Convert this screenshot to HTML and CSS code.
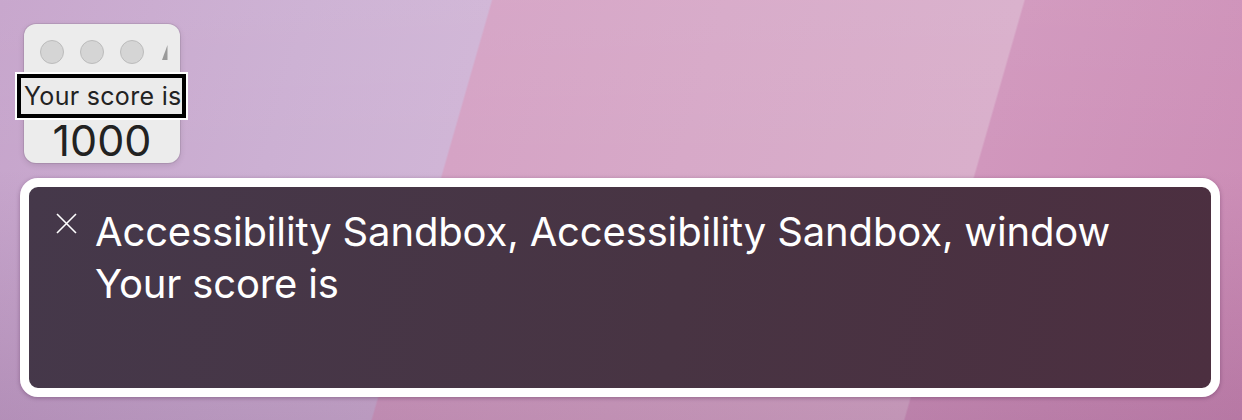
FILE: index.html
```html
<!DOCTYPE html>
<html lang="en">
<head>
  <meta charset="UTF-8">
  <title>Accessibility Sandbox</title>
  <link rel="stylesheet" href="styles.css">
</head>
<body>
  <div class="desktop">
    <!-- Tiny app window -->
    <div class="window">
      <div class="titlebar">
        <span class="light"></span>
        <span class="light"></span>
        <span class="light"></span>
        <svg class="tool-edge" width="6" height="15" viewBox="0 0 6 15">
          <polygon points="5.5,0 5.5,15 0,15" fill="#9a9a9a"/>
        </svg>
      </div>
      <div class="focus-ring">
        <span class="label">Your score is</span>
      </div>
      <div class="score">1000</div>
    </div>

    <!-- VoiceOver caption panel -->
    <div class="caption-panel">
      <div class="caption">
        <svg class="close" width="21" height="21" viewBox="0 0 21 21">
          <path d="M1 1 L20 20 M20 1 L1 20" stroke="#fff" stroke-width="1.6" fill="none"/>
        </svg>
        <div class="caption-text">
          <div>Accessibility Sandbox, Accessibility Sandbox, window</div>
          <div>Your score is</div>
        </div>
      </div>
    </div>
  </div>
</body>
</html>
```

FILE: styles.css
```css
body {
  margin: 0;
  padding: 0;
  font-family: Inter, "Noto Sans", sans-serif;
}
.desktop {
  width: 1242px;
  height: 420px;
  overflow: hidden;
  padding-top: 24px;
  box-sizing: border-box;
  background:
    linear-gradient(180deg, rgba(255,255,255,0.04) 0%, rgba(255,255,255,0) 40%, rgba(70,10,70,0.16) 100%),
    linear-gradient(106deg, #c6a4cb 0, #ccb0d3 300px, #d0b5d6 472px, #d5a3c5 474px, #d7a9c8 700px, #d9afcb 984px, #d197bd 986px, #cc8db6 100%);
}

/* app window */
.window {
  width: 156px;
  height: 139px;
  margin-left: 24px;
  background: #ececec;
  border-radius: 12px;
  box-shadow: 0 0 0 1px rgba(0,0,0,0.08), 0 2px 6px rgba(0,0,0,0.12);
}
.titlebar {
  display: flex;
  align-items: center;
  gap: 16px;
  height: 48px;
  padding: 7px 0 0 16px;
  box-sizing: border-box;
  overflow: hidden;
}
.light {
  width: 22px;
  height: 22px;
  border-radius: 50%;
  background: #d5d5d5;
  border: 1px solid #bcbcbc;
  flex: none;
}
.tool-edge {
  flex: none;
  margin-left: 2px;
  margin-top: 1px;
}
.focus-ring {
  width: 173px;
  height: 48px;
  margin-left: -9px;
  box-sizing: border-box;
  border: 2px solid #fff;
  position: relative;
  z-index: 1;
}
.focus-ring .label {
  display: block;
  height: 100%;
  box-sizing: border-box;
  border: 4px solid #000;
  background: #ebebeb;
  padding-left: 3px;
  font-size: 25px;
  letter-spacing: 0.3px;
  line-height: 36px;
  color: #222;
  white-space: nowrap;
  overflow: hidden;
}
.score {
  text-align: center;
  font-size: 43px;
  line-height: 40px;
  color: #222;
}

/* caption panel */
.caption-panel {
  width: 1200px;
  height: 219px;
  margin: 15px 0 0 20px;
  box-sizing: border-box;
  border: 9px solid #fff;
  border-radius: 18px;
  background: linear-gradient(100deg, #45384a 0%, #483443 55%, #4c2f40 100%);
  box-shadow: 0 1px 4px rgba(60,20,60,0.35);
}
.caption {
  display: flex;
  gap: 18px;
  padding: 19px 27px;
}
.close {
  flex: none;
  margin-top: 7px;
}
.caption-text {
  color: #fff;
  font-size: 40px;
  letter-spacing: -0.15px;
  line-height: 52px;
}
```
